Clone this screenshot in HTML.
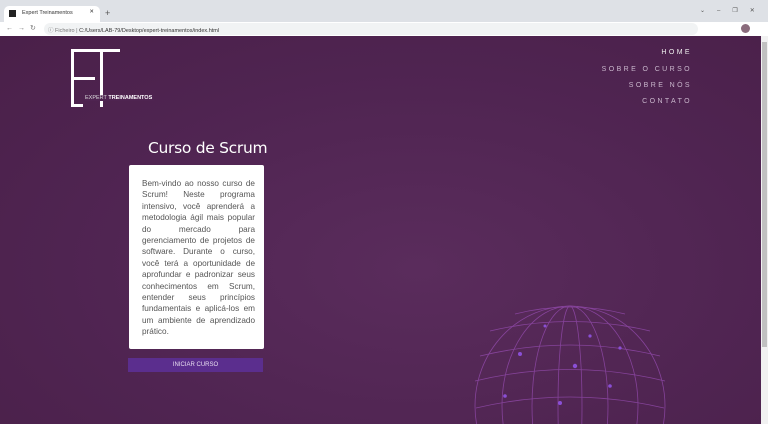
<!DOCTYPE html><html><head><meta charset="utf-8"><style>
*{margin:0;padding:0;box-sizing:border-box}
html,body{width:768px;height:432px;overflow:hidden}
body{background:#fff;font-family:"Liberation Sans",sans-serif;position:relative}
.tabs{position:absolute;left:0;top:0;width:768px;height:22px;background:#dee1e6}
.tab{position:absolute;left:4px;top:6px;width:96px;height:16px;background:#fff;border-radius:5px 5px 0 0;font-size:5.5px;color:#333;padding:4px 0 0 18px}
.addr{position:absolute;left:0;top:22px;width:768px;height:14px;background:#fff;font-size:5.5px;color:#333}
.page{position:absolute;left:0;top:36px;width:761px;height:388px;background:radial-gradient(ellipse at 55% 60%,#5a2c5c 0%,#4f2451 60%,#4a2049 100%);overflow:hidden}
.sb{position:absolute;left:761px;top:36px;width:7px;height:388px;background:#f1f1f1}
.thumb{position:absolute;left:762px;top:42px;width:5px;height:305px;background:#c1c1c1}
.nav{position:absolute;right:69px;text-align:right;font-size:7px;letter-spacing:2.4px;color:#c9b6cc}
.b{position:absolute;background:#fff}
h1{position:absolute;left:148px;top:139px;font-size:15.5px;font-weight:normal;color:#fff;font-family:"DejaVu Sans",sans-serif;letter-spacing:-.3px;white-space:nowrap}
.card{position:absolute;left:129px;top:165px;width:135px;height:184px;background:#fff;border-radius:2px;padding:13px 9px 0 13px;font-size:8.2px;line-height:11.4px;color:#555;text-align:justify}
.btn{position:absolute;left:128px;top:358px;width:135px;height:14px;background:#5b2e8e;color:#e8ddf0;font-size:6px;text-align:center;line-height:14px}
</style></head><body>
<div class="tabs"><div class="tab"><span style="position:absolute;left:5px;top:4px;width:7px;height:7px;background:#222"></span>Expert Treinamentos<span style="position:absolute;right:6px;top:3px">✕</span></div><span style="position:absolute;left:105px;top:8px;font-size:9px;color:#555">+</span><span style="position:absolute;left:700px;top:7px;font-size:6px;color:#555;letter-spacing:12px">⌄–❐✕</span></div>
<div class="addr"><span style="position:absolute;left:6px;top:2px;font-size:7px;color:#777;letter-spacing:5px">←→↻</span><div style="position:absolute;left:44px;top:1px;width:654px;height:12px;background:#f1f3f4;border-radius:6px;padding:3px 0 0 4px"><span style="color:#777">ⓘ Ficheiro | </span>C:/Users/LAB-79/Desktop/expert-treinamentos/index.html</div><span style="position:absolute;left:741px;top:2px;width:9px;height:9px;border-radius:50%;background:#8a6b7c"></span></div>
<div class="page">
<svg width="761" height="388" style="position:absolute;left:0;top:0" fill="none">
<g stroke="#9b4fb8" stroke-width=".8" opacity=".7">
<ellipse cx="570" cy="370" rx="95" ry="100"/>
<ellipse cx="570" cy="370" rx="68" ry="100"/>
<ellipse cx="570" cy="370" rx="38" ry="100"/>
<ellipse cx="570" cy="370" rx="12" ry="100"/>
<path d="M480 320 Q570 298 660 320 M475 345 Q570 322 665 345 M476 372 Q570 350 664 372 M490 295 Q570 276 650 295 M515 278 Q570 264 625 278"/>
</g>
<g fill="#8a4fd6"><circle cx="520" cy="318" r="2"/><circle cx="575" cy="330" r="2.2"/><circle cx="610" cy="350" r="1.8"/><circle cx="560" cy="367" r="2"/><circle cx="620" cy="312" r="1.6"/><circle cx="545" cy="290" r="1.5"/><circle cx="590" cy="300" r="1.6"/><circle cx="505" cy="360" r="1.8"/></g>
</svg>
<div class="b" style="left:71px;top:13px;width:3px;height:58px"></div>
<div class="b" style="left:71px;top:13px;width:26px;height:3px"></div>
<div class="b" style="left:71px;top:41px;width:24px;height:3px"></div>
<div class="b" style="left:71px;top:68px;width:12px;height:3px"></div>
<div class="b" style="left:85px;top:13px;width:35px;height:3px"></div>
<div class="b" style="left:100px;top:13px;width:3px;height:58px"></div>
<div style="position:absolute;left:85px;top:59px;font-size:5.5px;color:#ddd;background:#4f2451;padding-right:2px">EXPERT <b style="color:#fff">TREINAMENTOS</b></div>
<div class="nav" style="top:13px;color:#eee">HOME</div>
<div class="nav" style="top:30px">SOBRE O CURSO</div>
<div class="nav" style="top:46px">SOBRE NÓS</div>
<div class="nav" style="top:62px">CONTATO</div>
</div>
<h1>Curso de Scrum</h1>
<div class="card">Bem-vindo ao nosso curso de Scrum! Neste programa intensivo, você aprenderá a metodologia ágil mais popular do mercado para gerenciamento de projetos de software. Durante o curso, você terá a oportunidade de aprofundar e padronizar seus conhecimentos em Scrum, entender seus princípios fundamentais e aplicá-los em um ambiente de aprendizado prático.</div>
<div class="btn">INICIAR CURSO</div>
<div class="sb"></div><div class="thumb"></div>
</body></html>
